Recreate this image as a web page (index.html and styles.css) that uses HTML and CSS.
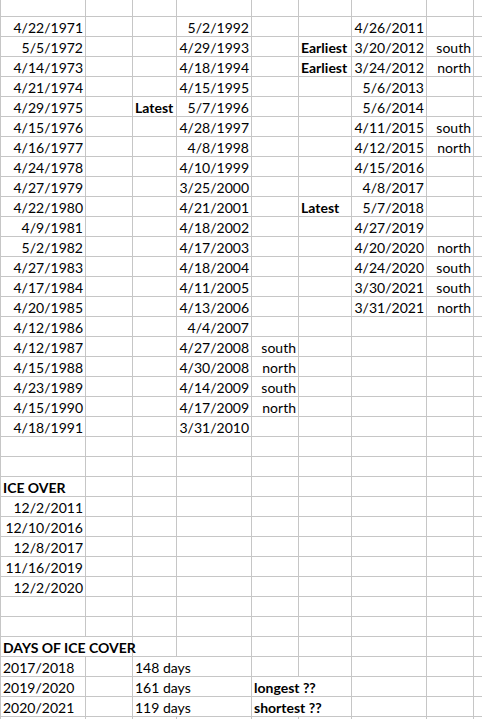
FILE: index.html
```html
<!DOCTYPE html>
<html>
<head>
<meta charset="utf-8">
<link rel="stylesheet" href="styles.css">
</head>
<body>
<div class="sheet">
<div class="c"></div><div class="c"></div><div class="c"></div><div class="c"></div><div class="c"></div><div class="c"></div><div class="c"></div><div class="c"></div><div class="c"></div>
<div class="c r">4/22/1971</div><div class="c"></div><div class="c"></div><div class="c r">5/2/1992</div><div class="c"></div><div class="c"></div><div class="c r">4/26/2011</div><div class="c"></div><div class="c"></div>
<div class="c r">5/5/1972</div><div class="c"></div><div class="c"></div><div class="c r">4/29/1993</div><div class="c"></div><div class="c b">Earliest</div><div class="c r">3/20/2012</div><div class="c r">south</div><div class="c"></div>
<div class="c r">4/14/1973</div><div class="c"></div><div class="c"></div><div class="c r">4/18/1994</div><div class="c"></div><div class="c b">Earliest</div><div class="c r">3/24/2012</div><div class="c r">north</div><div class="c"></div>
<div class="c r">4/21/1974</div><div class="c"></div><div class="c"></div><div class="c r">4/15/1995</div><div class="c"></div><div class="c"></div><div class="c r">5/6/2013</div><div class="c"></div><div class="c"></div>
<div class="c r">4/29/1975</div><div class="c"></div><div class="c b">Latest</div><div class="c r">5/7/1996</div><div class="c"></div><div class="c"></div><div class="c r">5/6/2014</div><div class="c"></div><div class="c"></div>
<div class="c r">4/15/1976</div><div class="c"></div><div class="c"></div><div class="c r">4/28/1997</div><div class="c"></div><div class="c"></div><div class="c r">4/11/2015</div><div class="c r">south</div><div class="c"></div>
<div class="c r">4/16/1977</div><div class="c"></div><div class="c"></div><div class="c r">4/8/1998</div><div class="c"></div><div class="c"></div><div class="c r">4/12/2015</div><div class="c r">north</div><div class="c"></div>
<div class="c r">4/24/1978</div><div class="c"></div><div class="c"></div><div class="c r">4/10/1999</div><div class="c"></div><div class="c"></div><div class="c r">4/15/2016</div><div class="c"></div><div class="c"></div>
<div class="c r">4/27/1979</div><div class="c"></div><div class="c"></div><div class="c r">3/25/2000</div><div class="c"></div><div class="c"></div><div class="c r">4/8/2017</div><div class="c"></div><div class="c"></div>
<div class="c r">4/22/1980</div><div class="c"></div><div class="c"></div><div class="c r">4/21/2001</div><div class="c"></div><div class="c b">Latest</div><div class="c r">5/7/2018</div><div class="c"></div><div class="c"></div>
<div class="c r">4/9/1981</div><div class="c"></div><div class="c"></div><div class="c r">4/18/2002</div><div class="c"></div><div class="c"></div><div class="c r">4/27/2019</div><div class="c"></div><div class="c"></div>
<div class="c r">5/2/1982</div><div class="c"></div><div class="c"></div><div class="c r">4/17/2003</div><div class="c"></div><div class="c"></div><div class="c r">4/20/2020</div><div class="c r">north</div><div class="c"></div>
<div class="c r">4/27/1983</div><div class="c"></div><div class="c"></div><div class="c r">4/18/2004</div><div class="c"></div><div class="c"></div><div class="c r">4/24/2020</div><div class="c r">south</div><div class="c"></div>
<div class="c r">4/17/1984</div><div class="c"></div><div class="c"></div><div class="c r">4/11/2005</div><div class="c"></div><div class="c"></div><div class="c r">3/30/2021</div><div class="c r">south</div><div class="c"></div>
<div class="c r">4/20/1985</div><div class="c"></div><div class="c"></div><div class="c r">4/13/2006</div><div class="c"></div><div class="c"></div><div class="c r">3/31/2021</div><div class="c r">north</div><div class="c"></div>
<div class="c r">4/12/1986</div><div class="c"></div><div class="c"></div><div class="c r">4/4/2007</div><div class="c"></div><div class="c"></div><div class="c"></div><div class="c"></div><div class="c"></div>
<div class="c r">4/12/1987</div><div class="c"></div><div class="c"></div><div class="c r">4/27/2008</div><div class="c r">south</div><div class="c"></div><div class="c"></div><div class="c"></div><div class="c"></div>
<div class="c r">4/15/1988</div><div class="c"></div><div class="c"></div><div class="c r">4/30/2008</div><div class="c r">north</div><div class="c"></div><div class="c"></div><div class="c"></div><div class="c"></div>
<div class="c r">4/23/1989</div><div class="c"></div><div class="c"></div><div class="c r">4/14/2009</div><div class="c r">south</div><div class="c"></div><div class="c"></div><div class="c"></div><div class="c"></div>
<div class="c r">4/15/1990</div><div class="c"></div><div class="c"></div><div class="c r">4/17/2009</div><div class="c r">north</div><div class="c"></div><div class="c"></div><div class="c"></div><div class="c"></div>
<div class="c r">4/18/1991</div><div class="c"></div><div class="c"></div><div class="c r">3/31/2010</div><div class="c"></div><div class="c"></div><div class="c"></div><div class="c"></div><div class="c"></div>
<div class="c"></div><div class="c"></div><div class="c"></div><div class="c"></div><div class="c"></div><div class="c"></div><div class="c"></div><div class="c"></div><div class="c"></div>
<div class="c"></div><div class="c"></div><div class="c"></div><div class="c"></div><div class="c"></div><div class="c"></div><div class="c"></div><div class="c"></div><div class="c"></div>
<div class="c b">ICE OVER</div><div class="c"></div><div class="c"></div><div class="c"></div><div class="c"></div><div class="c"></div><div class="c"></div><div class="c"></div><div class="c"></div>
<div class="c r">12/2/2011</div><div class="c"></div><div class="c"></div><div class="c"></div><div class="c"></div><div class="c"></div><div class="c"></div><div class="c"></div><div class="c"></div>
<div class="c r">12/10/2016</div><div class="c"></div><div class="c"></div><div class="c"></div><div class="c"></div><div class="c"></div><div class="c"></div><div class="c"></div><div class="c"></div>
<div class="c r">12/8/2017</div><div class="c"></div><div class="c"></div><div class="c"></div><div class="c"></div><div class="c"></div><div class="c"></div><div class="c"></div><div class="c"></div>
<div class="c r">11/16/2019</div><div class="c"></div><div class="c"></div><div class="c"></div><div class="c"></div><div class="c"></div><div class="c"></div><div class="c"></div><div class="c"></div>
<div class="c r">12/2/2020</div><div class="c"></div><div class="c"></div><div class="c"></div><div class="c"></div><div class="c"></div><div class="c"></div><div class="c"></div><div class="c"></div>
<div class="c"></div><div class="c"></div><div class="c"></div><div class="c"></div><div class="c"></div><div class="c"></div><div class="c"></div><div class="c"></div><div class="c"></div>
<div class="c"></div><div class="c"></div><div class="c"></div><div class="c"></div><div class="c"></div><div class="c"></div><div class="c"></div><div class="c"></div><div class="c"></div>
<div class="c b s2">DAYS OF ICE COVER</div><div class="c"></div><div class="c"></div><div class="c"></div><div class="c"></div><div class="c"></div><div class="c"></div><div class="c"></div>
<div class="c">2017/2018</div><div class="c"></div><div class="c s2">148 days</div><div class="c"></div><div class="c"></div><div class="c"></div><div class="c"></div><div class="c"></div>
<div class="c">2019/2020</div><div class="c"></div><div class="c s2">161 days</div><div class="c b s2">longest ??</div><div class="c"></div><div class="c"></div><div class="c"></div>
<div class="c">2020/2021</div><div class="c"></div><div class="c s2">119 days</div><div class="c b s2">shortest ??</div><div class="c"></div><div class="c"></div><div class="c"></div>
<div class="c"></div><div class="c"></div><div class="c"></div><div class="c"></div><div class="c"></div><div class="c"></div><div class="c"></div><div class="c"></div><div class="c"></div>
</div>
</body>
</html>
```

FILE: styles.css
```css
html, body {
  margin: 0;
  padding: 0;
  background: #ffffff;
  overflow: hidden;
}

.sheet {
  display: grid;
  grid-template-columns: 85px 47px 44px 75px 47px 53px 75px 47px 64px;
  grid-template-rows: 17px;
  grid-auto-rows: 20px;
  width: max-content;
  border-left: 1px solid #c6c6c6;
  font-family: Lato, "Liberation Sans", sans-serif;
  font-size: 14px;
  color: #000000;
}

.c {
  box-sizing: border-box;
  border-right: 1px solid #c6c6c6;
  border-bottom: 1px solid #c6c6c6;
  line-height: 21px;
  padding: 0 2px 0 2px;
  white-space: nowrap;
  overflow: visible;
}

.r {
  text-align: right;
}

.b {
  font-weight: bold;
}

.s2 {
  grid-column: span 2;
}
```
